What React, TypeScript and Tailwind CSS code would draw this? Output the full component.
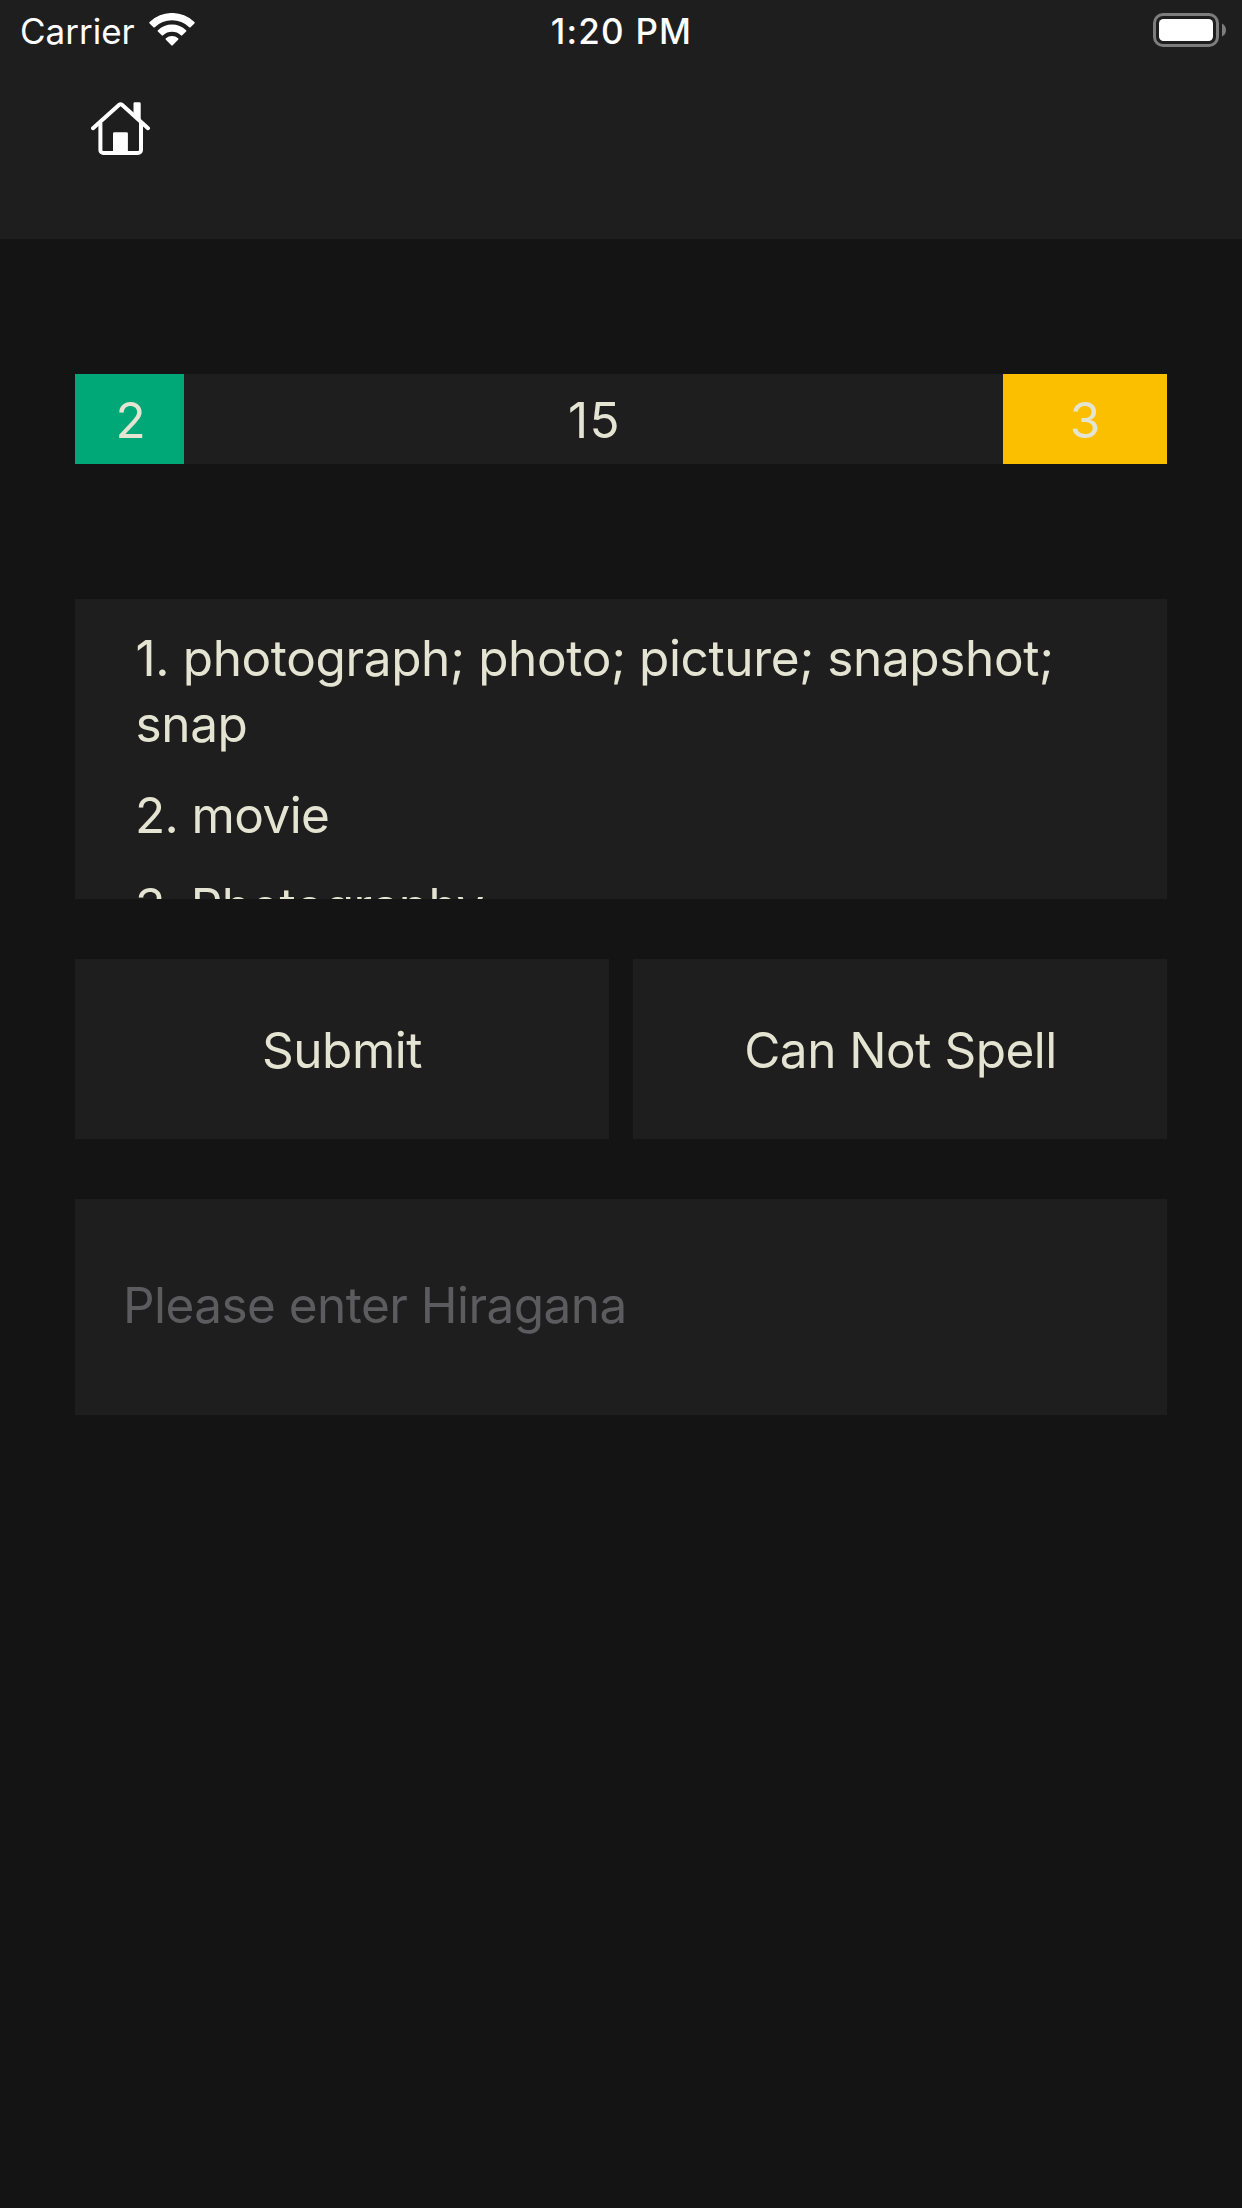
function WifiIcon() {
  return (
    <svg width="46" height="34" viewBox="149 13 46 34" fill="#fff">
      <path d="M149.6 23.4a1 1 0 0 1 0-1.4a32.3 32.3 0 0 1 44.8 0a1 1 0 0 1 0 1.4l-3.8 3.8a1 1 0 0 1-1.4 0a24.9 24.9 0 0 0-34.4 0a1 1 0 0 1-1.4 0z" />
      <path d="M157.9 31.6a1 1 0 0 1 0-1.4a20.6 20.6 0 0 1 28.2 0a1 1 0 0 1 0 1.4l-3.8 3.7a1 1 0 0 1-1.4 0a13.2 13.2 0 0 0-17.8 0a1 1 0 0 1-1.4 0z" />
      <path d="M165.9 39.8a1 1 0 0 1 0-1.5a9.3 9.3 0 0 1 12.2 0a1 1 0 0 1 0 1.5l-5.4 5.5a1 1 0 0 1-1.4 0z" />
    </svg>
  );
}

function BatteryIcon() {
  return (
    <svg width="73" height="34" viewBox="1153 13 73 34">
      <rect x="1154.5" y="14.5" width="63" height="31" rx="8.5" fill="none" stroke="#7d7d7d" strokeWidth="3" />
      <rect x="1159" y="19" width="54" height="22" rx="4.5" fill="#fff" />
      <path d="M1222 23.5q4 2 4 6.5t-4 6.5z" fill="#7d7d7d" />
    </svg>
  );
}

function HomeIcon() {
  return (
    <svg width="60" height="54" viewBox="91 102 60 54" fill="none" stroke="#fff" strokeWidth="4" strokeLinecap="round" strokeLinejoin="round">
      <path d="M93 128.2 119.2 104.8q1.4-1.2 2.8 0L148 128.2" />
      <path d="M100.4 123v27a3 3 0 0 0 3 3h34.6a3 3 0 0 0 3-3v-27" strokeLinecap="butt" />
      <path d="M133.5 113.5V103.5a1.3 1.3 0 0 1 1.3-1.3h4.6a1.3 1.3 0 0 1 1.3 1.3v16.5z" fill="#fff" stroke="none" />
      <path d="M113 153v-19.5a1.3 1.3 0 0 1 1.3-1.3h12.3a1.3 1.3 0 0 1 1.3 1.3V153z" fill="#fff" stroke="none" />
    </svg>
  );
}

const meanings = ["1. photograph; photo; picture; snapshot; snap", "2. movie", "3. Photography"];

export default function App() {
  return (
    <div className="flex h-[2208px] w-[1242px] flex-col bg-[#141414] font-['Inter',sans-serif] text-[49.5px] text-[#e4e4d2]">
      <header className="h-[239px] bg-[#1e1e1e] text-white">
        <div className="grid h-[60px] grid-cols-3 items-center pr-4 pl-5 text-[35px]">
          <div className="flex items-center gap-[14px]">
            <span className="pt-[3px] leading-[57px]">Carrier</span>
            <WifiIcon />
          </div>
          <span className="pt-[3px] pr-[3px] text-center font-medium leading-[57px] tracking-[1.2px]">1:20 PM</span>
          <div className="flex justify-end">
            <BatteryIcon />
          </div>
        </div>
        <button className="mt-[42px] ml-[91px] block" aria-label="Home">
          <HomeIcon />
        </button>
      </header>

      <main className="flex flex-col px-[75px] pt-[135px]">
        <div className="flex h-[90px] bg-[#1e1e1e] text-center leading-[92px]">
          <div className="w-[109px] bg-[#00a878] pl-[2px]">2</div>
          <div className="flex-1 pl-[2px] tracking-[1.5px]">15</div>
          <div className="w-[164px] bg-[#fcbf00]">3</div>
        </div>

        <ul className="mt-[135px] flex h-[300px] flex-col gap-[25px] overflow-hidden bg-[#1e1e1e] pr-[60px] pl-[60px] pt-[26px] leading-[66px] tracking-[-0.37px]">
          {meanings.map((m) => (
            <li key={m} className="shrink-0 first:pl-[0.5px] not-first:tracking-[-0.6px]">{m}</li>
          ))}
        </ul>

        <div className="mt-[60px] grid h-[180px] grid-cols-2 gap-6 tracking-[-0.5px]">
          <button className="bg-[#1e1e1e] pt-[2px]">Submit</button>
          <button className="bg-[#1e1e1e] pt-[2px] pl-[1px]">Can Not Spell</button>
        </div>

        <input
          className="mt-[60px] h-[216px] bg-[#1e1e1e] pb-[4px] pl-[48px] tracking-[-0.55px] outline-none placeholder:text-[#5c5c5e]"
          placeholder="Please enter Hiragana"
        />
      </main>
    </div>
  );
}
